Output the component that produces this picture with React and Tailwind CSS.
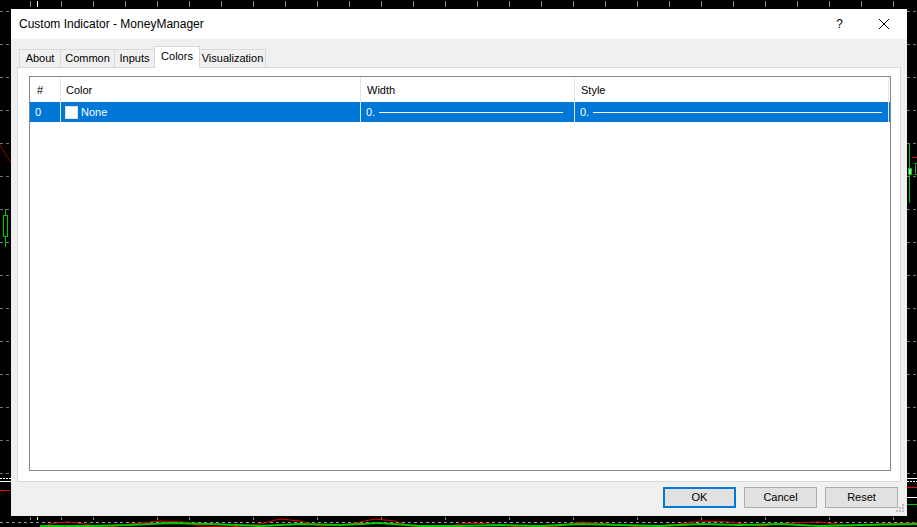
import React from "react";

const tabs = [
  { name: "About", w: "w-[42px]" },
  { name: "Common", w: "w-[55px]" },
  { name: "Inputs", w: "w-[41px]" },
  { name: "Colors", w: "w-[46px]", active: true },
  { name: "Visualization", w: "w-[67px]" },
];

const gridY = [11, 44, 77, 110, 143, 176, 209, 242, 275, 308, 341, 374, 407, 440, 473];
const topTicks = [30, 37, 61, 93, 125, 157, 189, 221, 253, 285, 317, 349, 381, 413, 445, 477, 509, 541, 573, 605, 637, 669, 701, 733, 765, 797, 829, 861, 893];

const ChartBackdrop = () => (
  <svg className="absolute inset-0" width="917" height="527" viewBox="0 0 917 527">
    <rect width="917" height="527" fill="#000" />
    {topTicks.map((x) => (
      <line key={x} x1={x + 0.5} y1="1" x2={x + 0.5} y2="7" stroke={x === 37 ? "#fff" : "#8a8a8a"} />
    ))}
    {gridY.map((y) => (
      <g key={y}>
        <line x1="0" y1={y + 0.5} x2="11" y2={y + 0.5} stroke="#6b7a8a" strokeDasharray="3 3" />
        <line x1="907" y1={y + 0.5} x2="917" y2={y + 0.5} stroke="#6b7a8a" strokeDasharray="3 3" />
      </g>
    ))}
    <path d="M0 145 L11 163" stroke="#e00000" strokeWidth="1" strokeDasharray="2 1" />
    <line x1="5.5" y1="209" x2="5.5" y2="247" stroke="#00c800" />
    <rect x="3.5" y="215.5" width="4" height="21" fill="#000" stroke="#00c800" />
    <line x1="909.5" y1="143" x2="909.5" y2="203" stroke="#00c800" />
    <rect x="908.5" y="168.5" width="3" height="6" fill="#ccc" stroke="#00c800" />
    <rect x="915.5" y="163.5" width="4" height="11" fill="none" stroke="#00c800" />
    <line x1="912" y1="157.5" x2="917" y2="157.5" stroke="#e00000" />
    <g stroke="#fff">
      <line x1="0" y1="478.5" x2="11" y2="478.5" strokeDasharray="2 1" />
      <line x1="0" y1="481.5" x2="11" y2="481.5" />
      <line x1="907" y1="478.5" x2="917" y2="478.5" />
      <line x1="907" y1="481.5" x2="917" y2="481.5" strokeDasharray="2 1" />
      <line x1="907" y1="497.5" x2="917" y2="497.5" />
    </g>
    <line x1="0" y1="490.5" x2="11" y2="490.5" stroke="#e00000" />
    <line x1="907" y1="487.5" x2="917" y2="487.5" stroke="#e00000" />
    <line x1="907" y1="504.5" x2="917" y2="504.5" stroke="#00c800" />
    <line x1="0" y1="522.5" x2="917" y2="522.5" stroke="#9a9a9a" strokeDasharray="3 3" />
    {[30, 37, 61, 93, 157, 189, 253, 317, 381, 445, 509, 573, 637, 701, 765, 829, 893].map((x) => (
      <line key={x} x1={x + 0.5} y1="517" x2={x + 0.5} y2="520" stroke={x === 37 ? "#fff" : "#8a8a8a"} />
    ))}
    <path
      d="M40 527 L55 523 L70 522 L90 525 L110 527 L130 524 L160 521 L185 522 L200 526 L230 527 L260 524 L280 519 L300 521 L320 526 L350 524 L375 519 L395 521 L410 526 L440 527 L470 523 L490 524 L520 527 L560 526 L580 522 L610 524 L640 527 L680 524 L700 521 L730 522 L760 526 L790 523 L820 522 L850 526 L880 524 L917 523"
      fill="none"
      stroke="#e00000"
    />
    <path
      d="M40 526 L90 526 L130 525 L170 523 L210 524 L260 526 L300 524 L340 525 L380 523 L420 526 L460 526 L500 525 L540 526 L580 524 L620 525 L660 526 L700 524 L740 525 L780 524 L820 526 L860 525 L917 524"
      fill="none"
      stroke="#00c800"
      strokeWidth="2"
    />
  </svg>
);

const Grip = () => (
  <svg className="absolute right-[1px] bottom-[2px]" width="10" height="10" viewBox="0 0 10 10">
    {[
      [6, 0],
      [3, 3],
      [6, 3],
      [0, 6],
      [3, 6],
      [6, 6],
    ].map(([x, y]) => (
      <rect key={`${x}-${y}`} x={x} y={y} width="2" height="2" fill="#bcbcbc" />
    ))}
  </svg>
);

const LineSample = () => <div className="flex-1 h-px bg-white" />;

export default function App() {
  return (
    <div className="relative w-[917px] h-[527px] overflow-hidden bg-black font-['Liberation_Sans',Arial,sans-serif] text-black">
      <ChartBackdrop />
      <div className="relative pt-[9px] pl-[11px]">
        <div className="relative w-[896px] h-[507px] flex flex-col bg-[#f0f0f0]">
          {/* title bar */}
          <div className="h-[30px] bg-white flex items-center pl-[8px] text-[12px] shrink-0">
            <span>Custom Indicator - MoneyManager</span>
            <span className="ml-auto mr-[36px] text-[12px] leading-none">?</span>
            <svg className="mr-[18px]" width="10" height="10" viewBox="0 0 10 10">
              <path d="M0 0 L10 10 M10 0 L0 10" stroke="#000" strokeWidth="1" />
            </svg>
          </div>

          {/* body */}
          <div className="flex-1 flex flex-col px-[6px] pt-[7px]">
            <div className="flex items-end h-[21px] ml-[2px] text-[11px]">
              {tabs.map((t, i) => (
                <div
                  key={t.name}
                  className={
                    t.active
                      ? `${t.w} h-[22px] -mb-px -ml-px z-10 bg-white border border-b-0 border-[#d9d9d9] flex items-center justify-center pb-[2px]`
                      : `${t.w} h-[18px] ${i > 0 ? "-ml-px" : ""} bg-[#f0f0f0] border border-b-0 border-[#d9d9d9] flex items-center justify-center`
                  }
                >
                  {t.name}
                </div>
              ))}
            </div>

            <div className="h-[415px] bg-white border border-[#d9d9d9] pl-[11px] pr-[9px] pt-[8px] pb-[10px]">
              <div className="h-full border border-[#828790] text-[11px]">
                <div className="grid grid-cols-[31px_300px_214px_314px] h-[25px]">
                  <div className="border-r border-[#e5e5e5] pl-[7px] pt-[2px] flex items-center">#</div>
                  <div className="border-r border-[#e5e5e5] pl-[5px] pt-[2px] flex items-center">Color</div>
                  <div className="border-r border-[#e5e5e5] pl-[6px] pt-[2px] flex items-center">Width</div>
                  <div className="border-r border-[#e5e5e5] pl-[6px] pt-[2px] flex items-center">Style</div>
                </div>
                <div className="grid grid-cols-[31px_300px_214px_314px] h-[20px] bg-[#0078d7] text-white">
                  <div className="border-r border-[#e5e5e5] pl-[5px] flex items-center">0</div>
                  <div className="border-r border-[#e5e5e5] pl-[4px] flex items-center gap-[3px]">
                    <span className="w-[13px] h-[13px] bg-white border border-[#e0e0e0]" />
                    <span>None</span>
                  </div>
                  <div className="border-r border-[#e5e5e5] pl-[5px] pr-[11px] flex items-center gap-[4px]">
                    <span>0.</span>
                    <LineSample />
                  </div>
                  <div className="border-r border-[#e5e5e5] pl-[5px] pr-[6px] flex items-center gap-[4px]">
                    <span>0.</span>
                    <LineSample />
                  </div>
                </div>
              </div>
            </div>

            <div className="flex justify-end gap-[8px] mt-[5px] pr-[3px] text-[11px]">
              <button className="w-[73px] h-[21px] bg-[#e1e1e1] border-2 border-[#0078d7]">OK</button>
              <button className="w-[73px] h-[21px] bg-[#e1e1e1] border border-[#adadad]">Cancel</button>
              <button className="w-[73px] h-[21px] bg-[#e1e1e1] border border-[#adadad]">Reset</button>
            </div>
          </div>
          <Grip />
        </div>
      </div>
    </div>
  );
}
